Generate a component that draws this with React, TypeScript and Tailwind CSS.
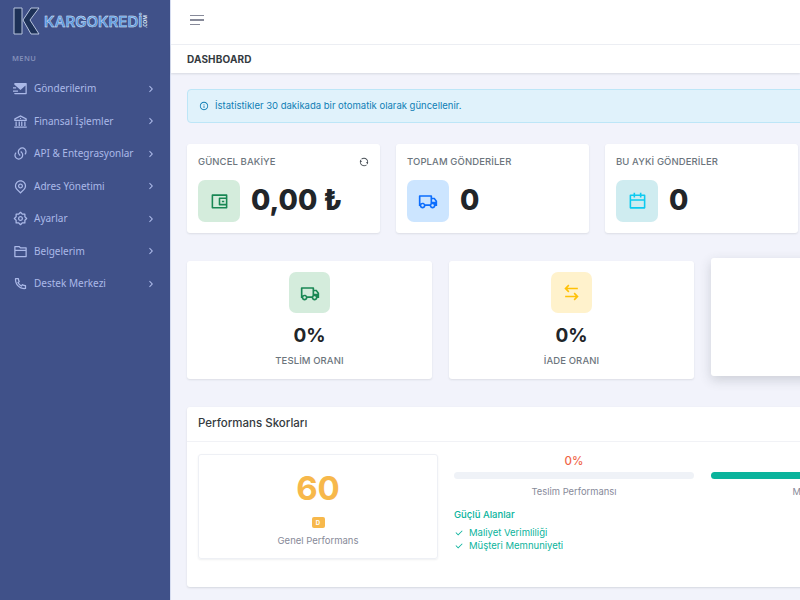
import { RiArrowRightSLine, RiMailSendFill, RiBankLine, RiLinksLine, RiMapPinLine, RiSettings2Line, RiFolder2Line, RiPhoneLine, RiInformationLine, RiTruckLine, RiCalendarLine, RiArrowLeftRightLine, RiCheckLine, RiRefreshLine, RiWallet2Line } from "react-icons/ri";

const menu = [
  { label: "Gönderilerim", icon: <RiMailSendFill size={15} /> },
  { label: "Finansal İşlemler", icon: <RiBankLine size={15} /> },
  { label: "API & Entegrasyonlar", icon: <RiLinksLine size={15} /> },
  { label: "Adres Yönetimi", icon: <RiMapPinLine size={15} /> },
  { label: "Ayarlar", icon: <RiSettings2Line size={15} /> },
  { label: "Belgelerim", icon: <RiFolder2Line size={15} /> },
  { label: "Destek Merkezi", icon: <RiPhoneLine size={15} /> },
];

function StatCard({ title, value, tile, icon, extra }: { title: string; value: string; tile: string; icon: React.ReactNode; extra?: React.ReactNode }) {
  return (
    <div className="w-[193px] h-[89px] shrink-0 bg-white rounded-[3px] shadow-[0_1px_2px_rgba(56,65,74,0.12)] px-[11px] pt-[11px]">
      <div className="flex items-center justify-between h-[14px]">
        <span className="text-[9.5px] font-medium tracking-[0.1px] text-[#6c757d] whitespace-nowrap">{title}</span>
        {extra}
      </div>
      <div className="flex items-center gap-[11px] mt-[11px]">
        <div className={`w-[42px] h-[42px] rounded-[7px] flex items-center justify-center ${tile}`}>{icon}</div>
        <span className="text-[28px] font-extrabold text-[#212529] leading-none -mt-[2px]">{value}</span>
      </div>
    </div>
  );
}

function RateCard({ label, tile, icon, raised }: { label: string; tile: string; icon: React.ReactNode; raised?: boolean }) {
  return (
    <div className={`w-[245px] h-[118px] shrink-0 bg-white rounded-[3px] flex flex-col items-center pt-[11px] ${raised ? "-translate-y-[3px] shadow-[0_4px_12px_rgba(56,65,74,0.2)]" : "shadow-[0_1px_2px_rgba(56,65,74,0.12)]"}`}>
      <div className={`w-[41px] h-[41px] rounded-[7px] flex items-center justify-center ${tile}`}>{icon}</div>
      <div className="text-[19px] font-bold text-[#212529] leading-none mt-[13px]">0%</div>
      <div className="text-[9.5px] font-medium tracking-[0.1px] text-[#6c757d] mt-[9px]">{label}</div>
    </div>
  );
}

export default function App() {
  return (
    <div className="w-[800px] h-[600px] overflow-hidden flex bg-[#f2f3fb] font-['Inter','Liberation_Sans',sans-serif]">
      <aside className="w-[170px] shrink-0 bg-[#405189] font-['Noto_Sans',sans-serif]">
        <div className="h-[42px] flex items-center pl-[13px] gap-[4px]">
          <svg width="27" height="28" viewBox="0 0 27 28" className="shrink-0">
            <path d="M1 1h8v26H1z" fill="#1d3157" stroke="#b9c6df" strokeWidth="1" />
            <path d="M10 13 L18 1h8l-9 12 9 14h-8z" fill="#1d3157" stroke="#b9c6df" strokeWidth="1" />
          </svg>
          <span className="text-[15px] font-semibold leading-none text-[#4f94e0] [-webkit-text-stroke:0.4px_#e4eefa] whitespace-nowrap font-['Inter',sans-serif]">KARGOKREDİ</span>
          <span className="text-[5px] font-bold text-[#dbe6f6] [writing-mode:vertical-rl] rotate-180 leading-none -ml-[3px]">.COM</span>
        </div>
        <div className="text-[7.5px] font-semibold tracking-[0.4px] text-[#838fb9] pl-[12px] mt-[11px]">MENU</div>
        <nav className="mt-[8px]">
          {menu.map((m) => (
            <div key={m.label} className="h-[32.5px] flex items-center pl-[13px] pr-[13px] text-[#abb9e8]">
              <span className="w-[15px] flex justify-center">{m.icon}</span>
              <span className="ml-[6px] text-[10px] flex-1 whitespace-nowrap">{m.label}</span>
              <RiArrowRightSLine size={12} />
            </div>
          ))}
        </nav>
      </aside>

      <main className="flex-1 min-w-0 border-l border-[#d5dcf0]">
        <header className="h-[45px] bg-white border-b border-[#eef0f5] flex items-center pl-[19px] pb-[4px]">
          <div className="flex flex-col gap-[3px]">
            <span className="w-[14px] h-[1.5px] bg-[#878a99]" />
            <span className="w-[14px] h-[1.5px] bg-[#878a99]" />
            <span className="w-[10px] h-[1.5px] bg-[#878a99]" />
          </div>
        </header>
        <div className="h-[28px] bg-white shadow-[0_1px_2px_rgba(56,65,74,0.15)] flex items-center pl-[16px] text-[10px] font-bold tracking-[0.15px] text-[#343a40]">DASHBOARD</div>

        <div className="pl-[16px] pt-[16px] w-[900px]">
          <div className="h-[34px] bg-[#e0f2fb] border border-[#bde6f7] rounded-[4px] flex items-center pl-[11px] text-[#0f7eb5] text-[9.5px] gap-[6px]">
            <RiInformationLine size={10} />
            <span>İstatistikler 30 dakikada bir otomatik olarak güncellenir.</span>
          </div>

          <div className="flex gap-[16px] mt-[21px]">
            <StatCard title="GÜNCEL BAKİYE" value="0,00 ₺" tile="bg-[#d4ecdc]" icon={<RiWallet2Line size={19} className="text-[#198754]" />} extra={<RiRefreshLine size={10} className="text-[#495057]" />} />
            <StatCard title="TOPLAM GÖNDERİLER" value="0" tile="bg-[#cce5ff]" icon={<RiTruckLine size={20} className="text-[#0d6efd]" />} />
            <StatCard title="BU AYKİ GÖNDERİLER" value="0" tile="bg-[#cfecf0]" icon={<RiCalendarLine size={19} className="text-[#0dcaf0]" />} />
          </div>

          <div className="flex gap-[17px] mt-[28px]">
            <RateCard label="TESLİM ORANI" tile="bg-[#d4ecdc]" icon={<RiTruckLine size={20} className="text-[#198754]" />} />
            <RateCard label="İADE ORANI" tile="bg-[#fff2cc]" icon={<RiArrowLeftRightLine size={19} className="text-[#ffc107]" />} />
            <RateCard raised label="AKTİF ORANI" tile="bg-[#cfecf0]" icon={<RiTruckLine size={20} />} />
          </div>

          <section className="mt-[28px] h-[180px] bg-white rounded-[3px] shadow-[0_1px_2px_rgba(56,65,74,0.15)]">
            <div className="h-[35px] border-b border-[#f1f2f6] flex items-center pl-[11px] text-[11.5px] font-medium text-[#343a40]">Performans Skorları</div>
            <div className="flex pl-[11px] pt-[12px] gap-[16px]">
              <div className="w-[240px] h-[105px] shrink-0 rounded-[3px] border border-[#eef0f5] shadow-[0_1px_2px_rgba(56,65,74,0.08)] flex flex-col items-center pt-[17px]">
                <div className="text-[33px] font-bold leading-none text-[#f7b84b]">60</div>
                <div className="mt-[12px] w-[13px] h-[11px] rounded-[2px] bg-[#f7b84b] text-white text-[6px] font-bold flex items-center justify-center">D</div>
                <div className="mt-[6px] text-[9.5px] text-[#878a99]">Genel Performans</div>
              </div>
              <div className="flex-1 min-w-0">
                <div className="flex gap-[17px]">
                  <div className="w-[240px] text-center">
                    <div className="text-[11.5px] font-medium text-[#f06548] leading-none mt-[2px]">0%</div>
                    <div className="h-[7px] mt-[4px] rounded-full bg-[#eff2f7]" />
                    <div className="mt-[6px] text-[9.4px] text-[#878a99]">Teslim Performansı</div>
                  </div>
                  <div className="w-[240px] text-center">
                    <div className="h-[7px] mt-[18px] rounded-full bg-[#0ab39c]" />
                    <div className="mt-[6px] text-[9.4px] text-[#878a99]">Maliyet Verimliliği</div>
                  </div>
                </div>
                <div className="mt-[9px] text-[9.5px] font-medium text-[#0ab39c]">Güçlü Alanlar</div>
                <div className="mt-[4px] text-[9.5px] text-[#0ab39c] leading-[13px]">
                  <div className="flex items-center gap-[5px]"><RiCheckLine size={10} /><span>Maliyet Verimliliği</span></div>
                  <div className="flex items-center gap-[5px]"><RiCheckLine size={10} /><span>Müşteri Memnuniyeti</span></div>
                </div>
              </div>
            </div>
          </section>
        </div>
      </main>
    </div>
  );
}
